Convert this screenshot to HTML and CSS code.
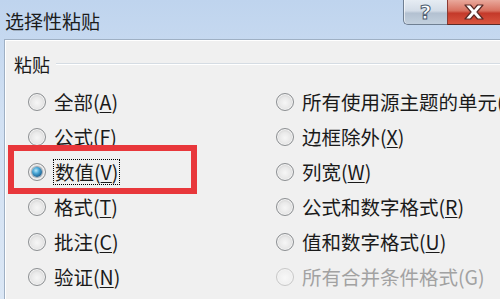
FILE: index.html
```html
<!DOCTYPE html>
<html lang="zh-CN">
<head>
<meta charset="utf-8">
<title>选择性粘贴</title>
<link rel="stylesheet" href="styles.css">
</head>
<body>
<div class="window">
  <div class="titlebar">
    <span class="title">选择性粘贴</span>
    <div class="caption">
      <div class="cbtn help"><span class="qmark">?</span></div>
      <div class="cbtn close">
        <svg width="22" height="16" viewBox="0 0 22 16">
          <path d="M2 1 H7.5 L11 5.2 L14.5 1 H20 L14 8 L20 15 H14.5 L11 10.8 L7.5 15 H2 L8 8 Z" fill="#fff" stroke="#5a2a26" stroke-width="1.2" stroke-linejoin="round"/>
        </svg>
      </div>
    </div>
  </div>
  <div class="frame">
    <div class="client">
      <div class="legend"><span class="legend-text">粘贴</span><span class="legend-line"></span></div>
      <div class="options">
        <div class="opt"><span class="radio"></span><span class="lbl">全部(<u>A</u>)</span></div>
        <div class="opt"><span class="radio"></span><span class="lbl">公式(<u>F</u>)</span></div>
        <div class="opt"><span class="radio checked"></span><span class="lbl focus">数值(<u>V</u>)</span></div>
        <div class="opt"><span class="radio"></span><span class="lbl">格式(<u>T</u>)</span></div>
        <div class="opt"><span class="radio"></span><span class="lbl">批注(<u>C</u>)</span></div>
        <div class="opt"><span class="radio"></span><span class="lbl">验证(<u>N</u>)</span></div>
        <div class="opt"><span class="radio"></span><span class="lbl">所有使用源主题的单元(<u>H</u>)</span></div>
        <div class="opt"><span class="radio"></span><span class="lbl">边框除外(<u>X</u>)</span></div>
        <div class="opt"><span class="radio"></span><span class="lbl">列宽(<u>W</u>)</span></div>
        <div class="opt"><span class="radio"></span><span class="lbl">公式和数字格式(<u>R</u>)</span></div>
        <div class="opt"><span class="radio"></span><span class="lbl">值和数字格式(<u>U</u>)</span></div>
        <div class="opt disabled"><span class="radio"></span><span class="lbl">所有合并条件格式(G)</span></div>
      </div>
    </div>
  </div>
  <div class="highlight"></div>
</div>
</body>
</html>
```
FILE: styles.css
```css
html, body {
  margin: 0;
  padding: 0;
}
body {
  width: 500px;
  height: 299px;
  overflow: hidden;
  font-family: "Noto Sans CJK SC", "Noto Sans", sans-serif;
  background: #f0f0f0;
  color: #1a1a1a;
}
.window {
  position: relative;
  height: 299px;
  display: flex;
  flex-direction: column;
  background: linear-gradient(180deg, #bfd4ee 0%, #d2e1f3 40%, #dbe7f5 100%);
}
.titlebar {
  height: 39px;
  display: flex;
  justify-content: space-between;
  align-items: flex-start;
  flex: none;
}
.title {
  font-size: 19px;
  line-height: 20px;
  margin: 11px 0 0 5px;
  color: #1c1c1c;
}
.caption {
  display: flex;
}
.cbtn {
  height: 25px;
  display: flex;
  align-items: center;
  justify-content: center;
  box-sizing: border-box;
}
.help {
  width: 44px;
  border: 1px solid #6f7f92;
  border-top: none;
  border-right: none;
  border-bottom-left-radius: 5px;
  background: linear-gradient(180deg, #e6ecf3 0%, #d3dce7 45%, #b3c1d1 55%, #c3d0de 100%);
  box-shadow: inset 1px 0 rgba(255,255,255,0.6);
}
.qmark {
  font-family: "DejaVu Sans", sans-serif;
  font-weight: bold;
  font-size: 20px;
  line-height: 20px;
  color: #fff;
  -webkit-text-stroke: 1px #4e5e72;
}
.close {
  width: 53px;
  border-bottom: 1px solid #5a2a26;
  border-left: 1px solid #8a3a33;
  background: linear-gradient(180deg, #e9a99c 0%, #d8705f 45%, #c4392a 55%, #d9553f 100%);
}
.frame {
  flex: 1;
  display: flex;
  padding-left: 4px;
}
.client {
  flex: 1;
  background: #f0f0f0;
  border-top: 1px solid #9fb0c4;
  border-left: 1px solid #9fb0c4;
  box-shadow: inset 1px 1px #ffffff;
}
.legend {
  display: flex;
  align-items: center;
  margin-top: 14px;
  padding-left: 9px;
  height: 20px;
}
.legend-text {
  font-size: 18px;
  line-height: 20px;
  color: #1a1a1a;
}
.legend-line {
  flex: 1;
  margin-left: 6px;
  border-top: 1px solid #d5dce3;
  border-bottom: 1px solid #ffffff;
}
.options {
  margin-top: 10px;
  padding-left: 23px;
  display: grid;
  grid-template-columns: 248px 1fr;
  grid-template-rows: repeat(6, 35px);
  grid-auto-flow: column;
}
.opt {
  display: flex;
  align-items: center;
  gap: 8px;
  white-space: nowrap;
  font-size: 19.5px;
  line-height: 24px;
}
.opt u {
  text-underline-offset: 2px;
  text-decoration-thickness: 1px;
}
.radio {
  flex: none;
  width: 18px;
  height: 18px;
  box-sizing: border-box;
  border-radius: 50%;
  border: 1px solid #8c8f92;
  background: radial-gradient(circle at 50% 55%, #f6f6f6 0%, #e9e9e9 45%, #cfcfcf 80%, #e2e2e2 100%);
  box-shadow: inset 0 0 0 1px #f4f4f4;
  display: flex;
  align-items: center;
  justify-content: center;
}
.radio.checked::after {
  content: "";
  width: 10px;
  height: 10px;
  border-radius: 50%;
  background: radial-gradient(circle at 40% 35%, #b9e6f8 0%, #49a7d6 35%, #1d5f8e 75%, #173f63 100%);
  box-shadow: 0 0 0 1px rgba(30,60,90,0.35);
}
.lbl.focus {
  outline: 1px dotted #000;
  outline-offset: 0px;
  padding: 0 1px;
}
.opt.disabled {
  color: #a2a2a2;
}
.opt.disabled .radio {
  border-color: #c8c8c8;
  background: radial-gradient(circle at 50% 55%, #f8f8f8 0%, #efefef 60%, #e4e4e4 100%);
}
.highlight {
  position: absolute;
  left: 8px;
  top: 145px;
  width: 189px;
  height: 49px;
  box-sizing: border-box;
  border: 6px solid #e8373b;
}
```
